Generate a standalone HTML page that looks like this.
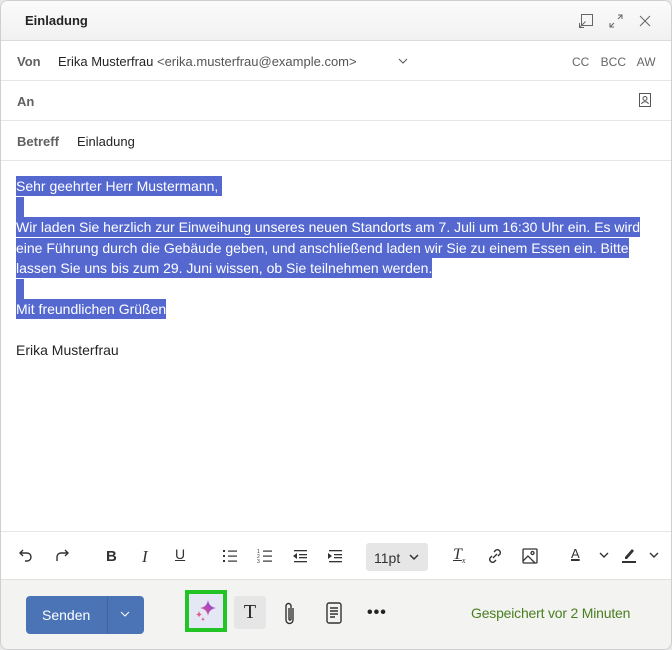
<!DOCTYPE html>
<html><head><meta charset="utf-8"><style>
*{box-sizing:border-box;margin:0;padding:0}
body{width:672px;height:650px;background:#e8e8e8;font-family:"Liberation Sans",sans-serif;color:#242424;overflow:hidden;position:relative}
.win{position:absolute;left:0;top:0;width:672px;height:650px;background:#fff;border:1px solid #cfcfcf;border-radius:8px;overflow:hidden}
.hdr{height:40px;background:linear-gradient(#fbfbfb,#f1f1f1);border-bottom:1px solid #dcdcdc;position:relative}
.hdr .t{position:absolute;left:24px;top:12px;font-size:13px;font-weight:bold;color:#242424}
.row{height:40px;border-bottom:1px solid #e6e6e6;position:relative;font-size:13px}
.lab{position:absolute;left:16px;top:13px;font-weight:bold;color:#616161}
.body{position:absolute;left:15px;top:175px;font-size:14px;line-height:20.5px;color:#fff;width:645px}
.sel{background:#5468d0;padding:2px 0}
.tb{position:absolute;left:0;top:530px;width:672px;height:48px;border-top:1px solid #e6e6e6}
.ft{position:absolute;left:0;top:578px;width:672px;height:72px;background:#f3f3f2;border-top:1px solid #e1e1e1}
.ic{position:absolute;color:#333}
</style></head><body>
<div class="win">
<div class="hdr"><div class="t">Einladung</div>
<svg class="ic" style="left:577px;top:12px" width="16" height="16" viewBox="0 0 16 16" fill="none" stroke="#666" stroke-width="1"><rect x="3.5" y="1.5" width="11" height="11"/><path d="M1.5 14.5l6-6M1.5 10v4.5H6"/></svg>
<svg class="ic" style="left:607px;top:12px" width="16" height="16" viewBox="0 0 16 16" fill="none" stroke="#666"><path d="M10 2h4v4M14 2l-4 4M6 14H2v-4M2 14l4-4"/></svg>
<svg class="ic" style="left:636px;top:12px" width="16" height="16" viewBox="0 0 16 16" fill="none" stroke="#666"><path d="M3 3l10 10M13 3L3 13"/></svg>
</div>
<div class="row"><span class="lab">Von</span><span style="position:absolute;left:57px;top:13px">Erika Musterfrau <span style="color:#555">&lt;erika.musterfrau@example.com&gt;</span></span>
<svg class="ic" style="left:396px;top:15px" width="12" height="10" viewBox="0 0 12 10" fill="none" stroke="#555"><path d="M2 3l4 4 4-4"/></svg>
<span style="position:absolute;left:571px;top:14px;font-size:12px;color:#666;word-spacing:8px">CC BCC AW</span></div>
<div class="row"><span class="lab">An</span>
<svg class="ic" style="left:638px;top:93px;position:fixed" width="14" height="14" viewBox="0 0 14 14" fill="none" stroke="#555"><rect x="1.5" y="0.5" width="11" height="13"/><circle cx="7" cy="5.5" r="2"/><path d="M3.5 11c1-3 6-3 7 0"/></svg></div>
<div class="row"><span class="lab">Betreff</span><span style="position:absolute;left:76px;top:13px">Einladung</span></div>
<div class="body">
<span class="sel">Sehr geehrter Herr Mustermann,&nbsp;</span><br>
<span class="sel">&nbsp;&nbsp;</span><br>
<span class="sel">Wir laden Sie herzlich zur Einweihung unseres neuen Standorts am 7. Juli um 16:30 Uhr ein. Es wird eine Führung durch die Gebäude geben, und anschließend laden wir Sie zu einem Essen ein. Bitte lassen Sie uns bis zum 29. Juni wissen, ob Sie teilnehmen werden.</span><br>
<span class="sel">&nbsp;&nbsp;</span><br>
<span class="sel">Mit freundlichen Grüßen</span><br><br>
<span style="color:#242424">Erika Musterfrau</span>
</div>
<div class="tb">
<svg class="ic" style="left:17px;top:16px" width="16" height="16" viewBox="0 0 16 16" fill="none" stroke="#333" stroke-width="1.4"><path d="M5 2L2 5l3 3M2 5h7a4 4 0 010 8H7"/></svg>
<svg class="ic" style="left:53px;top:16px" width="16" height="16" viewBox="0 0 16 16" fill="none" stroke="#333" stroke-width="1.4"><path d="M11 2l3 3-3 3M14 5H7a4 4 0 00-4 4v4"/></svg>
<span class="ic" style="left:105px;top:16px;font-weight:bold;font-size:15px">B</span>
<span class="ic" style="left:141px;top:15px;font-style:italic;font-family:'Liberation Serif';font-size:17px">I</span>
<span class="ic" style="left:174px;top:14px;text-decoration:underline;font-size:14px">U</span>
<svg class="ic" style="left:221px;top:16px" width="16" height="16" viewBox="0 0 16 16" fill="#333"><rect x="1" y="2" width="2" height="2"/><rect x="1" y="7" width="2" height="2"/><rect x="1" y="12" width="2" height="2"/><rect x="6" y="2.5" width="9" height="1.2"/><rect x="6" y="7.5" width="9" height="1.2"/><rect x="6" y="12.5" width="9" height="1.2"/></svg>
<svg class="ic" style="left:256px;top:16px" width="16" height="16" viewBox="0 0 16 16" fill="#333"><text x="0" y="5" font-size="5">1</text><text x="0" y="10" font-size="5">2</text><text x="0" y="15" font-size="5">3</text><rect x="6" y="2.5" width="9" height="1.2"/><rect x="6" y="7.5" width="9" height="1.2"/><rect x="6" y="12.5" width="9" height="1.2"/></svg>
<svg class="ic" style="left:291px;top:16px" width="16" height="16" viewBox="0 0 16 16" fill="#333"><rect x="2" y="2" width="13" height="1.3"/><rect x="7" y="6" width="8" height="1.3"/><rect x="7" y="9" width="8" height="1.3"/><rect x="2" y="13" width="13" height="1.3"/><path d="M1 8l4-3v6z"/></svg>
<svg class="ic" style="left:326px;top:16px" width="16" height="16" viewBox="0 0 16 16" fill="#333"><rect x="2" y="2" width="13" height="1.3"/><rect x="7" y="6" width="8" height="1.3"/><rect x="7" y="9" width="8" height="1.3"/><rect x="2" y="13" width="13" height="1.3"/><path d="M5 8L1 5v6z"/></svg>
<div class="ic" style="left:365px;top:11px;width:62px;height:28px;background:#e6e6e6;border-radius:3px;font-size:14px;padding:7px 0 0 8px;color:#333">11pt <svg width="12" height="10" viewBox="0 0 12 10" fill="none" stroke="#333" stroke-width="1.5" style="margin-left:4px"><path d="M2 2l4 4 4-4"/></svg></div>
<span class="ic" style="left:452px;top:14px;font-family:'Liberation Serif';font-style:italic;font-size:16px;text-decoration:underline">T<sub style="font-size:8px">x</sub></span>
<svg class="ic" style="left:485px;top:15px" width="18" height="18" viewBox="0 0 18 18" fill="none" stroke="#333" stroke-width="1.4"><path d="M8 5l2-2a3 3 0 014 4l-2 2M10 13l-2 2a3 3 0 01-4-4l2-2M7 11l4-4"/></svg>
<svg class="ic" style="left:520px;top:15px" width="18" height="18" viewBox="0 0 18 18" fill="none" stroke="#333" stroke-width="1.3"><rect x="2" y="2" width="14" height="14" rx="1"/><circle cx="11.5" cy="6" r="1.5"/><path d="M2 14l5-5 7 7"/></svg>
<span class="ic" style="left:570px;top:14px;font-size:13px;text-decoration:underline;text-decoration-thickness:2px">A</span>
<svg class="ic" style="left:597px;top:19px" width="12" height="10" viewBox="0 0 12 10" fill="none" stroke="#333" stroke-width="1.4"><path d="M2 2l4 4 4-4"/></svg>
<svg class="ic" style="left:620px;top:14px" width="16" height="18" viewBox="0 0 16 18" fill="#333"><path d="M4 11l7-8 2 2-7 8H4z"/><rect x="1" y="15" width="14" height="2"/></svg>
<svg class="ic" style="left:647px;top:19px" width="12" height="10" viewBox="0 0 12 10" fill="none" stroke="#333" stroke-width="1.4"><path d="M2 2l4 4 4-4"/></svg>
</div>
<div class="ft">
<div style="position:absolute;left:25px;top:16px;width:118px;height:38px;background:#4a74b5;border-radius:4px;color:#fff;font-size:14px">
<span style="position:absolute;left:16px;top:11px">Senden</span>
<div style="position:absolute;left:81px;top:0;width:1px;height:38px;background:#3f64a0"></div>
<svg style="position:absolute;left:93px;top:15px" width="12" height="8" viewBox="0 0 12 8" fill="none" stroke="#fff"><path d="M2 1l4 4 4-4"/></svg></div>
<div style="position:absolute;left:184px;top:10px;width:42px;height:42px;border:4px solid #22c425;background:#e4e8f4"></div>
<svg style="position:absolute;left:192px;top:18px" width="26" height="26" viewBox="0 0 26 26"><defs><linearGradient id="g" x1="0" y1="1" x2="1" y2="0"><stop offset="0" stop-color="#e8577e"/><stop offset="1" stop-color="#7b3ff2"/></linearGradient></defs><path d="M15 2q1 7 8 8q-7 1-8 8q-1-7-8-8q7-1 8-8z" fill="url(#g)"/><path d="M6 13q.5 3 3 3.5q-2.5.5-3 3q-.5-2.5-3-3q2.5-.5 3-3.5z" fill="#e05a8a"/><path d="M10 19q.3 2 2 2.3q-1.7.3-2 2q-.3-1.7-2-2q1.7-.3 2-2.3z" fill="#e05a8a"/></svg>
<div style="position:absolute;left:233px;top:16px;width:32px;height:33px;background:#e6e6e6;border-radius:3px;font-family:'Liberation Serif';font-size:20px;text-align:center;padding-top:5px">T</div>
<svg style="position:absolute;left:282px;top:21px" width="14" height="26" viewBox="0 0 14 26" fill="none" stroke="#333" stroke-width="1.4"><path d="M10 7v12a3.5 3.5 0 01-7 0V5a2.5 2.5 0 015 0v13a1 1 0 01-2 0V7"/></svg>
<svg style="position:absolute;left:324px;top:21px" width="18" height="24" viewBox="0 0 18 24" fill="none" stroke="#333" stroke-width="1.4"><rect x="2" y="2" width="14" height="20" rx="2"/><path d="M5 7h8M5 10h8M5 13h8M5 16h5"/></svg>
<span style="position:absolute;left:366px;top:24px;font-size:16px;font-weight:bold;letter-spacing:1px">•••</span>
<span style="position:absolute;left:470px;top:25px;font-size:14px;color:#4a7f1f;letter-spacing:-0.2px">Gespeichert vor 2 Minuten</span>
</div>
</div>
</body></html>
